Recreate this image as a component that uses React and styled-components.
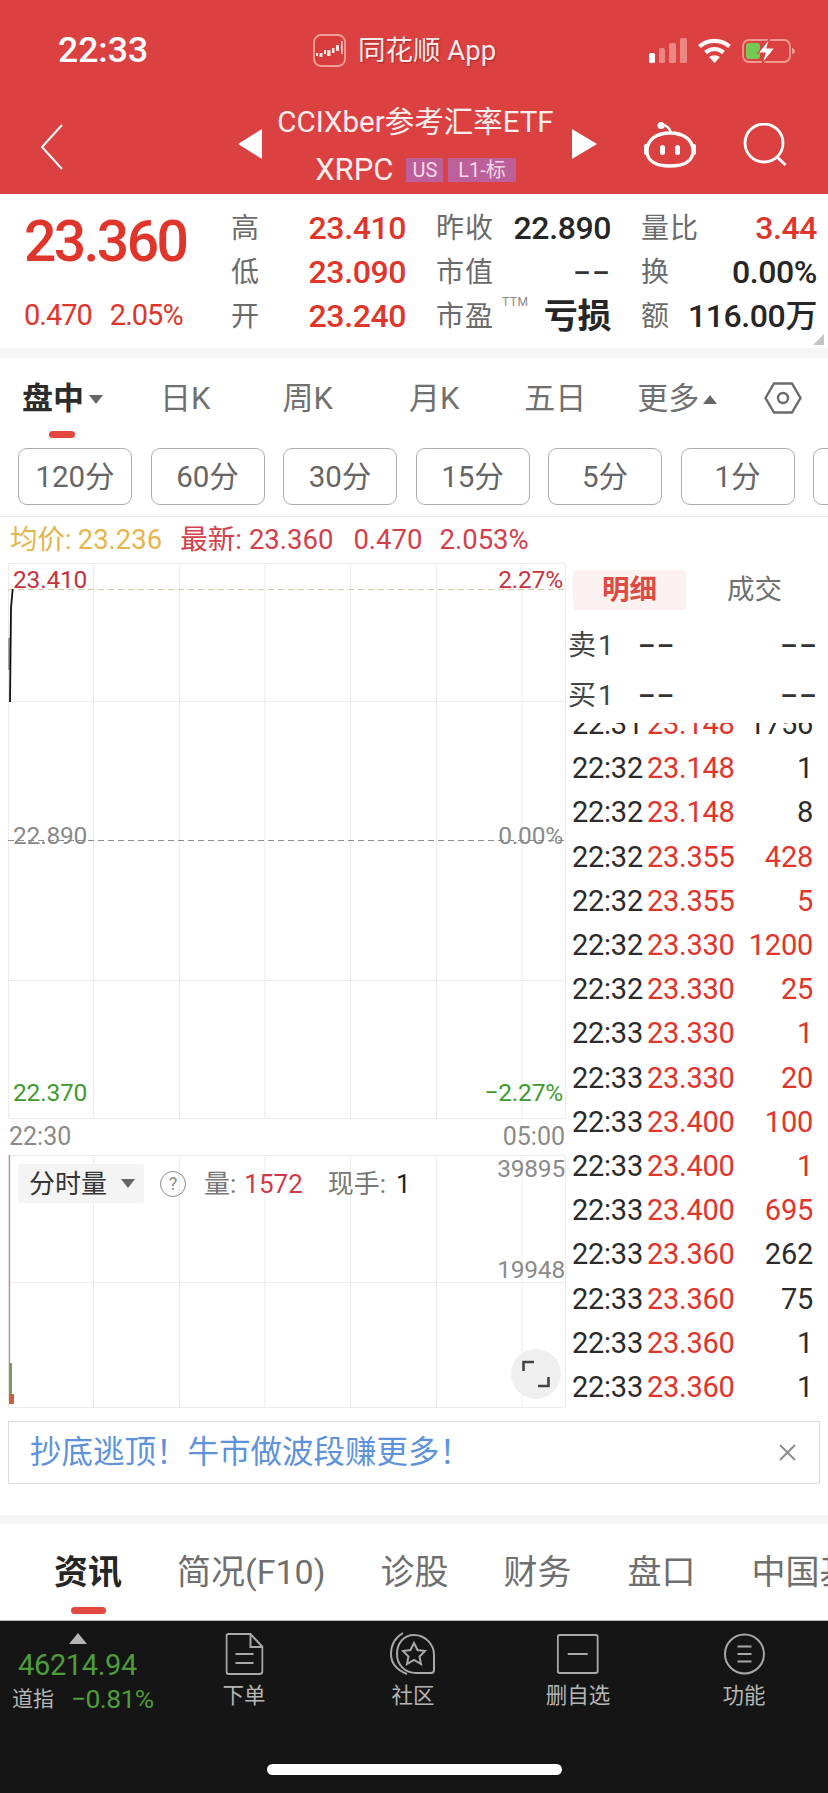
import React from "react";
import styled, { createGlobalStyle } from "styled-components";

const FONT = `Roboto, "Noto Sans CJK SC", "Noto Sans", sans-serif`;
const RED = "#e0352b";
const INK = "#2b2b2b";

const Global = createGlobalStyle`
  html, body { margin: 0; padding: 0; background: #fff; }
  body { font-family: ${FONT}; }
  * { box-sizing: border-box; }
`;

const Page = styled.div`
  width: 828px; height: 1793px; overflow: hidden; display: flex; flex-direction: column;
  background: #fff; color: ${INK};
`;

/* ---------- red header ---------- */
const Head = styled.header`
  height: 194px; background: #dc4141; color: #fff; display: flex; flex-direction: column;
`;
const StatusBar = styled.div`
  height: 90px; padding: 33px 32px 0 58px; display: flex; align-items: flex-start; position: relative;
`;
const Clock = styled.div`
  width: 255px; font: 500 35.5px/34px ${FONT};
`;
const AppName = styled.div`
  display: flex; align-items: center; gap: 12px; width: 336px; height: 35px;
  font: 400 27.5px/35px ${FONT}; color: #fbeaea; text-shadow: 1px 1px 2px rgba(90,0,0,.4);
`;
const StatusIcons = styled.div`
  display: flex; align-items: center; gap: 11px; height: 30px; padding-top: 5px;
`;
const NavBar = styled.nav`
  flex: 1; display: flex; align-items: center; padding: 0 0 0 40px; position: relative;
`;
const Back = styled.svg`
  width: 24px; height: 46px; margin-right: 174px; margin-top: 9px; flex: none;
`;
const Tri = styled.svg`
  width: 26px; height: 30px; flex: none; margin-top: 4px;
`;
const TitleBox = styled.div`
  width: 307px; flex: none; display: flex; flex-direction: column; align-items: center; gap: 14px; margin-top: 8px;
`;
const TitleTop = styled.div`
  font: 400 29.5px/34px ${FONT}; color: #fdeeee; white-space: nowrap; margin-left: -4px;
`;
const TitleBottom = styled.div`
  display: flex; align-items: center; gap: 5px; height: 34px; font: 400 31px/34px ${FONT}; color: #fdeeee; padding-right: 4px;
  & > span:first-child { margin-right: 8px; }
`;
const Badge = styled.span`
  height: 24px; padding: 0 ${p => p.$pad || 6}px; background: #bd5f9b; color: #f6d9e8; font: 400 20px/24px ${FONT};
`;
const NavIcons = styled.div`
  display: flex; align-items: center; gap: 47px; margin-left: 47px; margin-top: 6px;
`;

/* ---------- quote ---------- */
const Quote = styled.section`
  height: 154px; padding: 11px 11px 0 24px; display: flex; position: relative;
`;
const PriceBlock = styled.div`
  width: 207px; flex: none; display: flex; flex-direction: column; color: ${RED};
`;
const BigPrice = styled.div`
  font: 500 57px/54px ${FONT}; letter-spacing: -2.6px; margin-top: 10px; white-space: nowrap;
`;
const Change = styled.div`
  display: flex; gap: 18px; font: 400 29px/30px ${FONT}; letter-spacing: -1px; margin-top: 31px;
`;
const Stats = styled.div`
  display: grid; grid-template-columns: 175px 175px 176px; grid-auto-rows: 44px; column-gap: 30px; height: 132px; margin-top: 2px;
`;
const Stat = styled.div`
  display: flex; justify-content: space-between; align-items: center; white-space: nowrap;
`;
const StatLabel = styled.span`
  font: 400 28px/32px ${FONT}; color: #6b6b6b; position: relative; letter-spacing: 1px;
`;
const Sup = styled.sup`
  position: absolute; left: 66px; top: -5px; font: 400 12px/12px ${FONT}; color: #888; letter-spacing: 0.5px;
`;
const StatValue = styled.span`
  font: ${p => p.$weight || 500} ${p => p.$size || 32}px/36px ${FONT}; color: ${p => (p.$red ? RED : "#262626")};
  letter-spacing: -0.4px; margin-top: -3px;
`;
const Corner = styled.div`
  position: absolute; right: 4px; bottom: 3px; width: 0; height: 0;
  border-left: 11px solid transparent; border-bottom: 11px solid #c4c4c4;
`;
const Strip = styled.div`
  height: ${p => p.$h}px; margin-top: ${p => p.$mt || 0}px; background: #f5f5f5; flex: none;
`;

/* ---------- period tabs ---------- */
const PeriodTabs = styled.div`
  height: 90px; display: flex; padding: 20px 0 0 22px; align-items: flex-start; flex: none; position: relative;
`;
const PeriodTab = styled.div`
  position: relative; margin-left: ${p => p.$ml || 0}px; font: ${p => (p.$on ? 700 : 400)} 31px/42px ${FONT};
  color: ${p => (p.$on ? "#2b2b2b" : "#707070")}; white-space: nowrap; display: flex; align-items: center; gap: ${p => p.$gap || 5}px;
`;
const HexTab = styled.div`
  margin-left: ${p => p.$ml}px; margin-top: 4px; display: flex;
`;
const Caret = styled.i`
  width: 0; height: 0; border-left: 7px solid transparent; border-right: 7px solid transparent;
  ${p => (p.$up ? "border-bottom: 9px solid #666;" : "border-top: 9px solid #666;")}
`;
const Underline = styled.div`
  position: absolute; left: ${p => p.$left}px; top: ${p => p.$top}px; width: ${p => p.$w}px; height: 7px;
  border-radius: 4px; background: #e2483f;
`;
const Intervals = styled.div`
  display: flex; gap: 18.5px; padding-left: 18px; height: 57px; flex: none; overflow: hidden;
`;
const Interval = styled.div`
  width: 114px; flex: none; border: 1px solid #adadad; border-radius: 9px; display: flex; align-items: center;
  justify-content: center; font: 400 29.5px/32px ${FONT}; color: #666;
`;
const InfoLine = styled.div`
  margin-top: 11px; border-top: 1px solid #e8e8e8; height: 47px; padding-left: 10px; display: flex; align-items: center;
  font: 400 27.5px/30px ${FONT}; white-space: nowrap; flex: none;
`;
const InfoText = styled.span`
  color: ${p => p.$c}; margin-right: ${p => p.$mr || 0}px;
`;

/* ---------- chart + ticks ---------- */
const Main = styled.div`
  height: 845px; display: flex; padding-left: 8px; flex: none;
`;
const ChartCol = styled.div`
  width: 558px; flex: none; display: flex; flex-direction: column;
`;
const Pane = styled.div`
  position: relative; height: ${p => p.$h}px; flex: none;
`;
const PaneArt = styled.svg`
  display: block; width: 558px; height: ${p => p.$h}px;
`;
const PaneLabel = styled.span`
  position: absolute; top: ${p => p.$top}px; ${p => (p.$right ? `right: ${p.$r ?? 3}px;` : "left: 5px;")}
  font: 400 24.5px/28px ${FONT}; color: ${p => p.$c}; letter-spacing: -0.2px;
`;
const AxisRow = styled.div`
  height: 36px; display: flex; justify-content: space-between; align-items: center; padding: 0 1px; flex: none;
  font: 400 25px/30px ${FONT}; color: #8a8a8a;
`;
const VolHead = styled.div`
  position: absolute; left: 10px; top: 9px; display: flex; align-items: center; font: 400 26px/32px ${FONT}; color: #777;
`;
const VolSelect = styled.div`
  width: 126px; height: 39px; background: #f4f4f4; border-radius: 3px; display: flex; align-items: center;
  padding-left: 11px; gap: 14px; color: #333; margin-right: 16px;
`;
const Help = styled.div`
  width: 26px; height: 26px; border: 1.5px solid #888; border-radius: 50%; display: flex; align-items: center;
  justify-content: center; font: 400 18px/20px ${FONT}; color: #888; margin-right: 18px;
`;
const VolText = styled.span`
  color: ${p => p.$c || "#777"}; margin-right: ${p => p.$mr || 0}px; white-space: nowrap;
`;
const FullBtn = styled.div`
  position: absolute; right: 5px; bottom: 9px; width: 50px; height: 50px; border-radius: 50%; background: #efefef;
  display: flex; align-items: center; justify-content: center;
`;
const Ticks = styled.aside`
  flex: 1; display: flex; flex-direction: column; padding-top: 7px; min-width: 0;
`;
const TickTabs = styled.div`
  display: flex; height: 40px; padding-left: 7px; flex: none;
`;
const TickTab = styled.div`
  width: 113px; border-radius: 4px; margin-right: ${p => (p.$on ? 12 : 0)}px; text-align: center;
  font: ${p => (p.$on ? 700 : 400)} 27.5px/40px ${FONT}; color: ${p => (p.$on ? "#df4a42" : "#707070")};
  background: ${p => (p.$on ? "#fbf1f0" : "transparent")};
`;
const Book = styled.div`
  display: flex; flex-direction: column; padding: 11px 10px 0 2px; height: 113px; flex: none;
`;
const BookRow = styled.div`
  height: 50px; display: grid; grid-template-columns: 70px 1fr auto; align-items: center;
  font: 400 28px/32px ${FONT}; color: #444; letter-spacing: 2px;
`;
const Dash = styled.span`
  font: 500 27px/32px ${FONT}; letter-spacing: 1.5px; color: #333;
`;
const TickClip = styled.div`
  flex: 1; overflow: hidden; padding: 0 15px 0 6px;
`;
const TickList = styled.div`
  margin-top: -21px; display: flex; flex-direction: column;
`;
const TickRow = styled.div`
  height: 44.2px; flex: none; display: grid; grid-template-columns: 68px 87px 1fr; column-gap: 7px; align-items: center;
  font: 400 29px/34px ${FONT}; letter-spacing: -0.25px; color: ${INK}; white-space: nowrap;
`;
const TickPrice = styled.span`
  color: ${RED};
`;
const TickQty = styled.span`
  text-align: right; color: ${p => (p.$red ? RED : INK)};
`;

/* ---------- banner + info tabs ---------- */
const Banner = styled.div`
  margin: 13px 8px 0; height: 63px; border: 1px solid #dcdcdc; display: flex; align-items: center;
  justify-content: space-between; padding: 0 23px 0 21px; flex: none;
`;
const BannerText = styled.span`
  font: 400 31.5px/36px ${FONT}; color: #5e92dc; white-space: nowrap;
`;
const NewsTabs = styled.div`
  height: 96px; position: relative; display: flex; padding: 27px 0 0 54px; overflow: hidden; flex: none; white-space: nowrap;
`;
const NewsTab = styled.div`
  margin-left: ${p => p.$ml || 0}px; font: ${p => (p.$on ? 700 : 400)} 34px/42px ${FONT}; color: ${p => (p.$on ? "#262626" : "#6f6f6f")};
`;

/* ---------- dock ---------- */
const Dock = styled.footer`
  flex: 1; background: #151515; border-top: 1px solid #bbb; position: relative; display: flex; padding-top: 12px;
`;
const IndexBox = styled.div`
  width: 200px; flex: none; padding-left: 12px; display: flex; flex-direction: column; position: relative;
`;
const IndexUp = styled.div`
  width: 0; height: 0; margin: 0 0 4px 57px; border-left: 9px solid transparent; border-right: 9px solid transparent;
  border-bottom: 11px solid #b5b5b5;
`;
const IndexValue = styled.div`
  font: 400 29px/34px ${FONT}; letter-spacing: -0.35px; color: #4e9c3a; padding-left: 6px;
`;
const IndexLine = styled.div`
  display: flex; align-items: center; gap: 17px; white-space: nowrap; margin-top: 1px;
  font: 400 26.5px/32px ${FONT}; color: #4e9c3a; letter-spacing: -0.6px;
`;
const IndexName = styled.span`
  font: 400 21px/32px ${FONT}; color: #b8b8b8; letter-spacing: 0;
`;
const DockItem = styled.div`
  position: absolute; top: 11px; left: ${p => p.$x}px; transform: translateX(-50%); display: flex; flex-direction: column;
  align-items: center; gap: 5px; font: 400 21.5px/30px ${FONT}; color: #b5b5b5; white-space: nowrap;
`;
const DockIcon = styled.div`
  height: 44px; display: flex; align-items: center; justify-content: center;
`;
const HomeBar = styled.div`
  position: absolute; left: 267px; bottom: 18px; width: 295px; height: 11px; border-radius: 6px; background: #fff;
`;

/* ---------- drawings ---------- */
const Logo = () => (
  <svg width="33" height="33" viewBox="0 0 33 33">
    <rect x="1" y="1" width="31" height="31" rx="7" fill="#d93c3c" stroke="#f0a09a" strokeWidth="1.8" />
    <g fill="#f8e4e0">
      <rect x="3" y="19" width="2" height="3" />
      <rect x="6.500" y="19" width="3" height="4" />
      <rect x="11" y="16" width="2" height="4" />
      <rect x="14" y="16" width="3.500" height="6" />
      <rect x="19" y="14" width="2.500" height="5" />
      <rect x="23" y="11" width="3" height="6" />
      <rect x="28" y="7" width="1.600" height="13" />
    </g>
  </svg>
);
const Signal = () => (
  <svg width="38" height="25" viewBox="0 0 38 25">
    <rect x="0" y="15" width="6" height="10" rx="1.500" fill="#fff" />
    <rect x="10" y="10" width="6" height="15" rx="1.500" fill="#ec8683" />
    <rect x="20" y="5" width="7" height="20" rx="1.500" fill="#ec8683" />
    <rect x="31" y="0" width="7" height="25" rx="1.500" fill="#ec8683" />
  </svg>
);
const Wifi = () => (
  <svg width="33" height="25" viewBox="0 0 33 25" fill="none" stroke="#fff" strokeWidth="4.200">
    <path d="M1.500 8.500C10 1 23 1 31.500 8.500" />
    <path d="M7.500 14.500C13 10 20 10 25.500 14.500" />
    <path d="M16.500 25L11 19Q16.500 15.500 22 19Z" fill="#fff" stroke="none" />
  </svg>
);
const Battery = () => (
  <svg width="53" height="26" viewBox="0 0 53 26">
    <rect x="1" y="2" width="47" height="22" rx="6" fill="none" stroke="#f09a93" strokeWidth="1.800" />
    <rect x="4" y="5" width="14" height="16" rx="3" fill="#74c955" />
    <path d="M50 9.500Q53 11 53 13Q53 15 50 16.500Z" fill="#f09a93" />
    <path d="M28 0L16 15H23L20 26L33 10H25Z" fill="#fff" stroke="#dc4141" strokeWidth="1.200" />
  </svg>
);
const Robot = () => (
  <svg width="52" height="46" viewBox="0 0 52 46" fill="none" stroke="#fff" strokeWidth="3.400">
    <path d="M18 3C22 3 26 6 27 11" strokeWidth="2.600" />
    <circle cx="17" cy="3.500" r="3.500" fill="#fff" stroke="none" />
    <rect x="0" y="22" width="4" height="11" rx="2" fill="#fff" stroke="none" />
    <rect x="48" y="22" width="4" height="11" rx="2" fill="#fff" stroke="none" />
    <path d="M26 11C12 11 3 18 3 29C3 39 12 44 26 44C40 44 49 39 49 29C49 18 40 11 26 11Z" />
    <rect x="16" y="23" width="5" height="10" rx="2.500" fill="#fff" stroke="none" />
    <rect x="31" y="23" width="5" height="10" rx="2.500" fill="#fff" stroke="none" />
  </svg>
);
const Search = () => (
  <svg width="44" height="44" viewBox="0 0 44 44" fill="none" stroke="#fff" strokeWidth="2.800">
    <circle cx="21" cy="20" r="19" />
    <path d="M34 34L42.500 42" strokeWidth="3" />
  </svg>
);
const Hex = () => (
  <svg width="38" height="32" viewBox="0 0 38 32" fill="none" stroke="#6b6b6b" strokeWidth="2.400">
    <path d="M10 1.500H28L36.500 16L28 30.500H10L1.500 16Z" />
    <circle cx="19" cy="16" r="5" />
  </svg>
);

const VLINES = [85.5, 171.500, 257, 342.500, 428.500, 514];
const PriceArt = () => (
  <PaneArt $h={556} viewBox="0 0 558 556">
    <rect x="0.500" y="0.500" width="557" height="555" fill="#fff" stroke="#ececec" />
    {VLINES.map(x => <line key={x} x1={x} x2={x} y1="0" y2="556" stroke="#ececec" />)}
    <line x1="0" x2="558" y1="138.500" y2="138.500" stroke="#ececec" />
    <line x1="0" x2="558" y1="417.500" y2="417.500" stroke="#ececec" />
    <line x1="0" x2="558" y1="26.500" y2="26.500" stroke="#d9c9a0" strokeDasharray="6 4" />
    <line x1="0" x2="558" y1="277.500" y2="277.500" stroke="#8c8c8c" strokeDasharray="6 4" />
    <line x1="1" x2="1" y1="75" y2="107" stroke="#888" strokeWidth="1.500" />
    <path d="M4.700 26L3 45L2 139" fill="none" stroke="#111" strokeWidth="1.800" />
  </PaneArt>
);
const VolArt = () => (
  <PaneArt $h={253} viewBox="0 0 558 253">
    <rect x="0.500" y="0.500" width="557" height="252" fill="#fff" stroke="#ececec" />
    {VLINES.map(x => <line key={x} x1={x} x2={x} y1="0" y2="253" stroke="#ececec" />)}
    <line x1="0" x2="558" y1="127.500" y2="127.500" stroke="#ececec" />
    <line x1="1.500" x2="1.500" y1="0" y2="245" stroke="#dc7a75" strokeWidth="1.200" />
    <rect x="1" y="208" width="3" height="41" fill="#7a9a5f" />
    <rect x="1" y="239" width="5" height="10" fill="#c9603f" />
  </PaneArt>
);

const DocIcon = () => (
  <svg width="38" height="42" viewBox="0 0 38 42" fill="none" stroke="#a8a8a8" strokeWidth="2">
    <path d="M3 1H25L37 14V38Q37 41 34 41H3Q1 41 1 38V3Q1 1 3 1Z" />
    <path d="M25 1V14H37" />
    <path d="M10 21H28M10 30H28" />
  </svg>
);
const CommunityIcon = () => (
  <svg width="46" height="44" viewBox="0 0 46 44" fill="none" stroke="#a8a8a8" strokeWidth="2">
    <path d="M17 42C7 38 1 31 1 22C1 12 6 5 13 1" />
    <path d="M24 3C35 3 44 12 44 23V38Q44 41 41 41H26C15 41 7 33 7 22C7 11 14 3 24 3Z" />
    <path d="M24 11L27.500 18L35 19L29.500 24.500L31 32L24 28L17 32L18.500 24.500L13 19L20.500 18Z" />
  </svg>
);
const RemoveIcon = () => (
  <svg width="42" height="40" viewBox="0 0 42 40" fill="none" stroke="#a8a8a8" strokeWidth="2">
    <rect x="1" y="1" width="40" height="38" rx="2" />
    <path d="M11 20H31" />
  </svg>
);
const MenuIcon = () => (
  <svg width="42" height="42" viewBox="0 0 42 42" fill="none" stroke="#a8a8a8" strokeWidth="2">
    <circle cx="21" cy="21" r="19.500" />
    <path d="M14 13.500H28M14 21H28M14 28.500H28" />
  </svg>
);

const TICKS = [
  ["22:31", "23.148", "1756", 0], ["22:32", "23.148", "1", 0], ["22:32", "23.148", "8", 0], ["22:32", "23.355", "428", 1],
  ["22:32", "23.355", "5", 1], ["22:32", "23.330", "1200", 1], ["22:32", "23.330", "25", 1], ["22:33", "23.330", "1", 1],
  ["22:33", "23.330", "20", 1], ["22:33", "23.400", "100", 1], ["22:33", "23.400", "1", 1], ["22:33", "23.400", "695", 1],
  ["22:33", "23.360", "262", 0], ["22:33", "23.360", "75", 0], ["22:33", "23.360", "1", 0], ["22:33", "23.360", "1", 0],
];

export default function App() {
  return (
    <Page>
      <Global />
      <Head>
        <StatusBar>
          <Clock>22:33</Clock>
          <AppName><Logo />同花顺 App</AppName>
          <StatusIcons><Signal /><Wifi /><Battery /></StatusIcons>
        </StatusBar>
        <NavBar>
          <Back viewBox="0 0 24 46" fill="none" stroke="#fff" strokeWidth="2">
            <path d="M22 1L2 23L22 45" />
          </Back>
          <Tri viewBox="0 0 26 30"><path d="M24 0V30L0 15Z" fill="#fff" /></Tri>
          <TitleBox>
            <TitleTop>CCIXber参考汇率ETF</TitleTop>
            <TitleBottom>
              <span>XRPC</span>
              <Badge>US</Badge>
              <Badge $pad={10}>L1-标</Badge>
            </TitleBottom>
          </TitleBox>
          <Tri viewBox="0 0 26 30"><path d="M1 0V30L26 15Z" fill="#fff" /></Tri>
          <NavIcons><Robot /><Search /></NavIcons>
        </NavBar>
      </Head>

      <Quote>
        <PriceBlock>
          <BigPrice>23.360</BigPrice>
          <Change><span>0.470</span><span>2.05%</span></Change>
        </PriceBlock>
        <Stats>
          <Stat><StatLabel>高</StatLabel><StatValue $red>23.410</StatValue></Stat>
          <Stat><StatLabel>昨收</StatLabel><StatValue>22.890</StatValue></Stat>
          <Stat><StatLabel>量比</StatLabel><StatValue $red>3.44</StatValue></Stat>
          <Stat><StatLabel>低</StatLabel><StatValue $red>23.090</StatValue></Stat>
          <Stat><StatLabel>市值</StatLabel><Dash>––</Dash></Stat>
          <Stat><StatLabel>换</StatLabel><StatValue>0.00%</StatValue></Stat>
          <Stat><StatLabel>开</StatLabel><StatValue $red>23.240</StatValue></Stat>
          <Stat><StatLabel>市盈<Sup>TTM</Sup></StatLabel><StatValue $weight={700} $size={34}>亏损</StatValue></Stat>
          <Stat><StatLabel>额</StatLabel><StatValue>116.00万</StatValue></Stat>
        </Stats>
        <Corner />
      </Quote>
      <Strip $h={10} />

      <PeriodTabs>
        <PeriodTab $on>盘中<Caret /></PeriodTab>
        <PeriodTab $ml={57}>日K</PeriodTab>
        <PeriodTab $ml={72}>周K</PeriodTab>
        <PeriodTab $ml={76}>月K</PeriodTab>
        <PeriodTab $ml={65}>五日</PeriodTab>
        <PeriodTab $ml={51} $gap={4}>更多<Caret $up /></PeriodTab>
        <HexTab $ml={47}><Hex /></HexTab>
        <Underline $left={49} $top={73} $w={26} />
      </PeriodTabs>
      <Intervals>
        {["120分", "60分", "30分", "15分", "5分", "1分", ""].map((t, i) => <Interval key={i}>{t}</Interval>)}
      </Intervals>
      <InfoLine>
        <InfoText $c="#e7b44c" $mr={6}>均价:</InfoText>
        <InfoText $c="#e7b44c" $mr={18}>23.236</InfoText>
        <InfoText $c="#d2404a" $mr={7}>最新:</InfoText>
        <InfoText $c="#d2404a" $mr={20}>23.360</InfoText>
        <InfoText $c="#d2404a" $mr={17}>0.470</InfoText>
        <InfoText $c="#d2404a">2.053%</InfoText>
      </InfoLine>

      <Main>
        <ChartCol>
          <Pane $h={556}>
            <PriceArt />
            <PaneLabel $top={3} $c="#c8323c">23.410</PaneLabel>
            <PaneLabel $top={3} $right $c="#c8323c">2.27%</PaneLabel>
            <PaneLabel $top={259} $c="#8a8a8a">22.890</PaneLabel>
            <PaneLabel $top={259} $right $c="#8a8a8a">0.00%</PaneLabel>
            <PaneLabel $top={516} $c="#3f9a2e">22.370</PaneLabel>
            <PaneLabel $top={516} $right $c="#3f9a2e">−2.27%</PaneLabel>
          </Pane>
          <AxisRow><span>22:30</span><span>05:00</span></AxisRow>
          <Pane $h={253}>
            <VolArt />
            <VolHead>
              <VolSelect>分时量<Caret /></VolSelect>
              <Help>?</Help>
              <VolText $mr={8}>量:</VolText>
              <VolText $c="#cf3a48" $mr={25}>1572</VolText>
              <VolText $mr={10}>现手:</VolText>
              <VolText $c="#222">1</VolText>
            </VolHead>
            <PaneLabel $top={0} $right $r={1} $c="#8a8a8a">39895</PaneLabel>
            <PaneLabel $top={101} $right $r={1} $c="#8a8a8a">19948</PaneLabel>
            <FullBtn>
              <svg width="28" height="28" viewBox="0 0 28 28" fill="none" stroke="#444" strokeWidth="2.600">
                <path d="M1.500 11V2H12M26.500 17V26H16" />
              </svg>
            </FullBtn>
          </Pane>
        </ChartCol>
        <Ticks>
          <TickTabs>
            <TickTab $on>明细</TickTab>
            <TickTab>成交</TickTab>
          </TickTabs>
          <Book>
            <BookRow><span>卖1</span><Dash>––</Dash><Dash>––</Dash></BookRow>
            <BookRow><span>买1</span><Dash>––</Dash><Dash>––</Dash></BookRow>
          </Book>
          <TickClip>
            <TickList>
              {TICKS.map(([t, p, q, r], i) => (
                <TickRow key={i}><span>{t}</span><TickPrice>{p}</TickPrice><TickQty $red={!!r}>{q}</TickQty></TickRow>
              ))}
            </TickList>
          </TickClip>
        </Ticks>
      </Main>

      <Banner>
        <BannerText>抄底逃顶！牛市做波段赚更多！</BannerText>
        <svg width="17" height="17" viewBox="0 0 17 17" stroke="#8a8a8a" strokeWidth="1.800"><path d="M1 1L16 16M16 1L1 16" /></svg>
      </Banner>
      <Strip $h={9} $mt={31} />
      <NewsTabs>
        <NewsTab $on>资讯</NewsTab>
        <NewsTab $ml={55}>简况(F10)</NewsTab>
        <NewsTab $ml={55}>诊股</NewsTab>
        <NewsTab $ml={55}>财务</NewsTab>
        <NewsTab $ml={56}>盘口</NewsTab>
        <NewsTab $ml={56}>中国基金</NewsTab>
        <Underline $left={71} $top={83} $w={35} />
      </NewsTabs>

      <Dock>
        <IndexBox>
          <IndexUp />
          <IndexValue>46214.94</IndexValue>
          <IndexLine><IndexName>道指</IndexName><span>−0.81%</span></IndexLine>
        </IndexBox>
        <DockItem $x={244}><DockIcon><DocIcon /></DockIcon>下单</DockItem>
        <DockItem $x={413}><DockIcon><CommunityIcon /></DockIcon>社区</DockItem>
        <DockItem $x={578}><DockIcon><RemoveIcon /></DockIcon>删自选</DockItem>
        <DockItem $x={744}><DockIcon><MenuIcon /></DockIcon>功能</DockItem>
        <HomeBar />
      </Dock>
    </Page>
  );
}
